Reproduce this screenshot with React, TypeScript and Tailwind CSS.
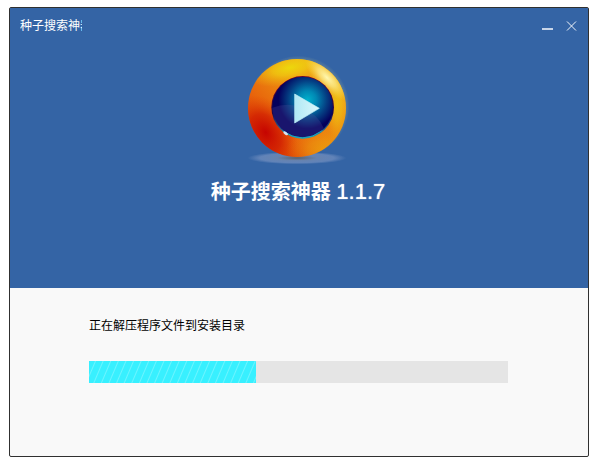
import React from 'react';

const APP_NAME = '种子搜索神器';
const VERSION = '1.1.7';

function Logo() {
  return (
    <svg viewBox="36 30 312 336" className="h-28 w-[104px]" aria-hidden="true">
      <defs>
        <linearGradient id="ring" x1="0.15" y1="0.85" x2="0.8" y2="0.15">
          <stop offset="0" stopColor="#dc3c04" />
          <stop offset="0.3" stopColor="#e8640c" />
          <stop offset="0.65" stopColor="#ec8c10" />
          <stop offset="1" stopColor="#f0a81c" />
        </linearGradient>
        <radialGradient id="red">
          <stop offset="0" stopColor="#c40000" stopOpacity="0.95" />
          <stop offset="0.5" stopColor="#cc1000" stopOpacity="0.6" />
          <stop offset="1" stopColor="#e04000" stopOpacity="0" />
        </radialGradient>
        <radialGradient id="yellow">
          <stop offset="0" stopColor="#ecd80c" />
          <stop offset="0.4" stopColor="#f0cc10" stopOpacity="0.75" />
          <stop offset="1" stopColor="#f0b010" stopOpacity="0" />
        </radialGradient>
        <radialGradient id="shine">
          <stop offset="0" stopColor="#fff8b0" />
          <stop offset="0.4" stopColor="#fcec88" stopOpacity="0.75" />
          <stop offset="1" stopColor="#f8d840" stopOpacity="0" />
        </radialGradient>
        <radialGradient id="glow">
          <stop offset="0.9" stopColor="#c8c880" stopOpacity="0.3" />
          <stop offset="1" stopColor="#c8c880" stopOpacity="0" />
        </radialGradient>
        <radialGradient id="lens" cx="0.58" cy="0.38" r="0.48">
          <stop offset="0" stopColor="#00b0cc" />
          <stop offset="0.3" stopColor="#0088b4" />
          <stop offset="0.65" stopColor="#044084" />
          <stop offset="1" stopColor="#04005c" />
        </radialGradient>
        <linearGradient id="play" x1="0" y1="0" x2="1" y2="0">
          <stop offset="0" stopColor="#b0e8f4" />
          <stop offset="1" stopColor="#dcf8fc" />
        </linearGradient>
        <linearGradient id="rim" x1="0" y1="0" x2="0" y2="1">
          <stop offset="0" stopColor="#800020" />
          <stop offset="0.6" stopColor="#200848" />
          <stop offset="1" stopColor="#20a0b8" />
        </linearGradient>
        <radialGradient id="shadow">
          <stop offset="0" stopColor="#5c6068" />
          <stop offset="0.4" stopColor="#6c86b0" stopOpacity="0.9" />
          <stop offset="0.75" stopColor="#7490c0" stopOpacity="0.7" />
          <stop offset="1" stopColor="#7490c0" stopOpacity="0" />
        </radialGradient>
        <clipPath id="disc">
          <circle cx="186" cy="189" r="147" />
        </clipPath>
        <clipPath id="lensClip">
          <circle cx="203" cy="187" r="91" />
        </clipPath>
      </defs>
      <ellipse cx="186" cy="339" rx="148" ry="19" fill="url(#shadow)" />
      <circle cx="191" cy="184" r="152" fill="url(#glow)" />
      <circle cx="186" cy="189" r="147" fill="url(#ring)" />
      <g clipPath="url(#disc)">
        <ellipse cx="92" cy="262" rx="120" ry="84" fill="url(#red)" transform="rotate(58 92 262)" />
        <ellipse cx="262" cy="316" rx="110" ry="70" fill="url(#yellow)" opacity="0.4" />
        <ellipse cx="165" cy="68" rx="130" ry="52" fill="url(#yellow)" transform="rotate(-12 165 68)" />
        <ellipse cx="306" cy="180" rx="34" ry="110" fill="url(#yellow)" opacity="0.6" />
        <ellipse cx="276" cy="98" rx="88" ry="34" fill="url(#shine)" transform="rotate(46 276 98)" />
      </g>
      <circle cx="203" cy="187" r="94" fill="url(#rim)" />
      <circle cx="203" cy="186" r="91" fill="url(#lens)" />
      <g clipPath="url(#lensClip)">
        <circle cx="158" cy="298" r="119" fill="#5850a0" opacity="0.26" />
      </g>
      <path d="M143 258Q203 300 262 257" fill="none" stroke="#18a8bc" strokeWidth="3" />
      <ellipse cx="152" cy="265" rx="8" ry="4" fill="#d8e4f4" transform="rotate(35 152 265)" />
      <path d="M179 147L253 190L179 234Z" fill="url(#play)" stroke="#c0f0f8" strokeWidth="2" strokeLinejoin="round" />
    </svg>
  );
}

function TitleBar() {
  return (
    <div className="flex h-9 items-center justify-between pr-1 pl-2.5">
      <span className="w-[62px] overflow-hidden text-xs whitespace-nowrap">{APP_NAME}</span>
      <div className="flex">
        <button type="button" aria-label="最小化" className="flex size-6 items-center justify-center">
          <svg viewBox="0 0 12 12" className="size-3" shapeRendering="crispEdges">
            <path d="M0 8h11v2H0z" fill="#c8d5e8" />
          </svg>
        </button>
        <button type="button" aria-label="关闭" className="flex size-6 items-center justify-center">
          <svg viewBox="0 0 12 12" className="size-3" fill="none" stroke="#f2f6fb">
            <path d="M1 1.5l9 9M10 1.5l-9 9" />
          </svg>
        </button>
      </div>
    </div>
  );
}

export default function App() {
  return (
    <main className="min-h-screen bg-white pt-[7px] pr-[7px] pb-1 pl-[9px] font-['Liberation_Sans','Noto_Sans_CJK_SC',sans-serif]">
      <section className="rounded-xs border border-[#303030] bg-[#f9f9f9]">
        <header className="bg-[#3464a5] pb-[82px] text-white">
          <TitleBar />
          <div className="flex flex-col items-center gap-[11px] pt-[11px]">
            <Logo />
            <h1 className="pr-0.5 text-xl leading-7 font-bold">
              {APP_NAME}{' '}
              <span className="text-[22px] font-normal [text-shadow:0_0_1px_#fff]">{VERSION}</span>
            </h1>
          </div>
        </header>

        <div className="pt-7 pr-20 pb-[73px] pl-[79px]">
          <label htmlFor="install" className="block text-xs leading-5 text-black">
            正在解压程序文件到安装目录
          </label>
          <progress
            id="install"
            max={1000}
            value={398}
            className="mt-[25px] block h-[22px] w-full appearance-none [&::-webkit-progress-bar]:bg-[#e5e5e5] [&::-webkit-progress-value]:bg-[#38f0ff] [&::-webkit-progress-value]:bg-[repeating-linear-gradient(113deg,#38f0ff_0px,#38f0ff_5px,#6cf4ff_6px,#38f0ff_7px)]"
          />
        </div>
      </section>
    </main>
  );
}
